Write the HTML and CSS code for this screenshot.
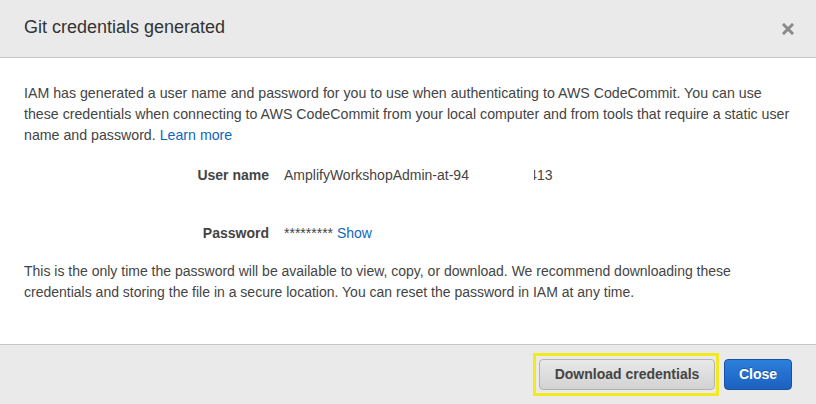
FILE: index.html
```html
<!DOCTYPE html>
<html lang="en">
<head>
<meta charset="utf-8">
<title>Git credentials generated</title>
<link rel="stylesheet" href="styles.css">
</head>
<body>
<div class="modal">
  <div class="modal-header">
    <h1 class="modal-title">Git credentials generated</h1>
    <button class="icon-close" aria-label="Close">
      <svg width="12" height="12" viewBox="0 0 12 12"><path d="M2 2 L10 10 M10 2 L2 10" stroke="#8a8a8a" stroke-width="3" stroke-linecap="square"/></svg>
    </button>
  </div>
  <div class="modal-body">
    <p class="text intro">IAM has generated a user name and password for you to use when authenticating to AWS CodeCommit. You can use these credentials when connecting to AWS CodeCommit from your local computer and from tools that require a static user name and password. <a href="#" class="link">Learn more</a></p>
    <dl class="creds">
      <dt class="label">User name</dt>
      <dd class="value">AmplifyWorkshopAdmin-at-94<span class="redacted"></span><span class="sliver"><span class="sliver-in">4</span></span>13</dd>
      <dt class="label">Password</dt>
      <dd class="value">********* <a href="#" class="link">Show</a></dd>
    </dl>
    <p class="text note">This is the only time the password will be available to view, copy, or download. We recommend downloading these credentials and storing the file in a secure location. You can reset the password in IAM at any time.</p>
  </div>
  <div class="modal-footer">
    <span class="highlight"><button class="btn btn-default">Download credentials</button></span>
    <button class="btn btn-primary">Close</button>
  </div>
</div>
</body>
</html>
```
FILE: styles.css
```css
* { box-sizing: border-box; }
html, body { margin: 0; padding: 0; background: #fff; }
body {
  font-family: "Liberation Sans", Arial, Helvetica, sans-serif;
  color: #444;
  width: 816px;
  height: 404px;
  overflow: hidden;
}
.modal {
  display: flex;
  flex-direction: column;
  height: 404px;
}
.modal-header {
  height: 58px;
  background: #eaeaea;
  border-bottom: 1px solid #c6c6c6;
  display: flex;
  align-items: center;
  justify-content: space-between;
  padding: 0 22px 0 24px;
}
.modal-title {
  margin: 0;
  font-size: 18px;
  font-weight: normal;
  color: #333;
  position: relative;
  top: -1px;
}
.icon-close {
  background: none;
  border: 0;
  padding: 0;
  width: 12px;
  height: 12px;
  display: flex;
  cursor: pointer;
}
.modal-body {
  flex: 1;
  padding: 25px 24px 0 24px;
}
.text {
  margin: 0;
  font-size: 14px;
  line-height: 21px;
  color: #444;
}
.intro { font-size: 14.2px; }
.link { color: #1166bb; text-decoration: none; }
.creds {
  margin: 19px 0 0 0;
  display: grid;
  grid-template-columns: 245px 1fr;
  column-gap: 15px;
  row-gap: 37px;
  font-size: 14px;
  line-height: 21px;
}
.label {
  margin: 0;
  text-align: right;
  font-weight: bold;
  color: #444;
}
.value { margin: 0; color: #444; white-space: nowrap; }
.redacted { display: inline-block; width: 65px; }
.sliver {
  display: inline-block;
  width: 3px;
  overflow: hidden;
  vertical-align: top;
  height: 21px;
}
.sliver-in { display: inline-block; margin-left: -5px; }
.note { margin-top: 17px; }
.modal-footer {
  height: 60px;
  background: #eaeaea;
  border-top: 1px solid #c6c6c6;
  display: flex;
  align-items: center;
  justify-content: flex-end;
  gap: 5px;
  padding: 0 24px 1px 0;
}
.highlight {
  display: flex;
  padding: 3px 1px 3px 3px;
  border: 3px solid #f2ea1e;
  border-radius: 1px;
}
.btn {
  height: 31px;
  border-radius: 4px;
  font-family: "Liberation Sans", Arial, Helvetica, sans-serif;
  font-size: 14px;
  font-weight: bold;
  padding: 0;
  white-space: nowrap;
  cursor: pointer;
}
.btn-default {
  width: 176px;
  color: #444;
  background: linear-gradient(#e9e9e9, #d2d2d2);
  border: 1px solid #b3b3b3;
}
.btn-primary {
  width: 68px;
  color: #fff;
  background: linear-gradient(#2d7fdc, #1b61c0);
  border: 1px solid #1a50a0;
  text-shadow: 0 -1px 0 rgba(0,0,0,0.25);
}
```
